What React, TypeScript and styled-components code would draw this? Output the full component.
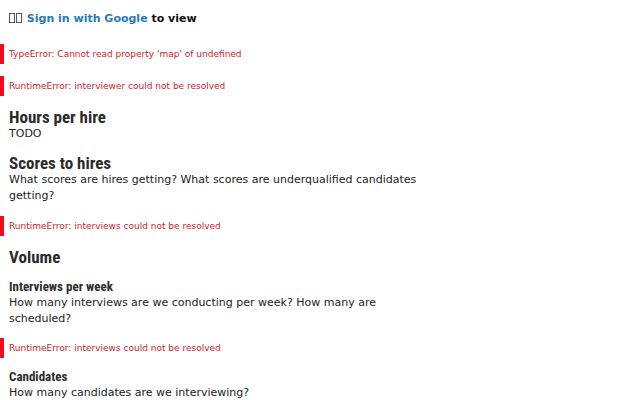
import React from "react";
import styled, { createGlobalStyle } from "styled-components";

const Global = createGlobalStyle`
  html, body { margin: 0; padding: 0; background: #fff; }
  body { font-family: "DejaVu Sans", sans-serif; color: #222; }
`;

const Page = styled.div`
  display: flex;
  flex-direction: column;
  gap: 12px;
  padding: 11px 0 0 0;
`;

const SignIn = styled.div`
  padding-left: 9px;
  font-size: 11px;
  font-weight: bold;
  line-height: 16px;
  color: #111;
  margin-bottom: 5px;
`;

const Tofu = styled.span`
  display: inline-block;
  box-sizing: border-box;
  width: 6px;
  height: 10px;
  border: 1px solid #555;
  margin-right: 1px;
  vertical-align: -1px;
`;

const Link = styled.a`
  color: #2a7ab8;
  text-decoration: none;
`;

const ErrorBox = styled.div`
  border-left: 4px solid #e8101f;
  padding-left: 5px;
  height: 20px;
  display: flex;
  align-items: center;
  font-size: 9px;
  color: #d01b2b;
`;

const Block = styled.div<{ $before?: number; $after?: number }>`
  padding-left: 9px;
  width: 420px;
  margin-top: ${(p) => p.$before ?? 0}px;
  margin-bottom: ${(p) => p.$after ?? 0}px;
`;

const H2 = styled.h2`
  margin: 0;
  font-family: "Roboto Condensed", "Roboto", sans-serif;
  font-stretch: condensed;
  font-weight: bold;
  font-size: 17px;
  line-height: 18px;
  color: #2b2b2b;
`;

const H3 = styled.h3`
  margin: 0;
  font-family: "Roboto Condensed", "Roboto", sans-serif;
  font-stretch: condensed;
  font-weight: bold;
  font-size: 13px;
  line-height: 16px;
  color: #2b2b2b;
`;

const P = styled.p`
  margin: 0;
  font-size: 11px;
  line-height: 16px;
  color: #222;
`;

export default function App() {
  return (
    <>
      <Global />
      <Page>
        <SignIn>
          <Tofu />
          <Tofu /> <Link href="#">Sign in with Google</Link> to view
        </SignIn>
        <ErrorBox>TypeError: Cannot read property 'map' of undefined</ErrorBox>
        <ErrorBox>RuntimeError: interviewer could not be resolved</ErrorBox>
        <Block>
          <H2>Hours per hire</H2>
          <P>TODO</P>
        </Block>
        <Block>
          <H2>Scores to hires</H2>
          <P>
            What scores are hires getting? What scores are underqualified
            candidates getting?
          </P>
        </Block>
        <ErrorBox>RuntimeError: interviews could not be resolved</ErrorBox>
        <Block>
          <H2>Volume</H2>
        </Block>
        <Block $before={1} $after={-1}>
          <H3>Interviews per week</H3>
          <P>
            How many interviews are we conducting per week? How many are
            scheduled?
          </P>
        </Block>
        <ErrorBox>RuntimeError: interviews could not be resolved</ErrorBox>
        <Block $before={-1}>
          <H3>Candidates</H3>
          <P>How many candidates are we interviewing?</P>
        </Block>
      </Page>
    </>
  );
}
